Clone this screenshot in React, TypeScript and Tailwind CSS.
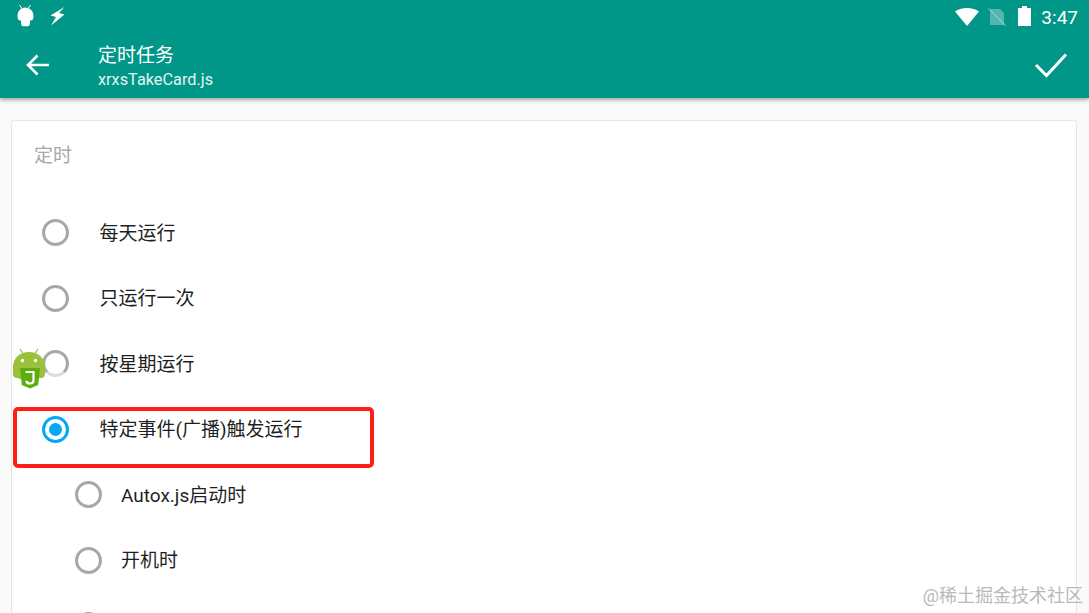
const cjk = "font-['Roboto','Noto_Sans_CJK_SC',sans-serif]";

function Radio({ checked = false, fading = false }: { checked?: boolean; fading?: boolean }) {
  return (
    <span
      className={`flex h-[27px] w-[27px] shrink-0 items-center justify-center rounded-full border-[3px] ${
        checked ? "border-[#03a9f4]" : fading ? "border-[#a8a8a8] border-b-[#dcdcdc]" : "border-[#a8a8a8]"
      }`}
    >
      {checked && <span className="h-[13px] w-[13px] rounded-full bg-[#03a9f4]" />}
    </span>
  );
}

function Option({
  label,
  checked,
  nested,
  fading,
}: {
  label?: string;
  checked?: boolean;
  nested?: boolean;
  fading?: boolean;
}) {
  return (
    <div className={`flex h-[65.5px] shrink-0 items-center ${nested ? "pl-[63px]" : "pl-[30px]"}`}>
      <Radio checked={checked} fading={fading} />
      {label && (
        <span className={`pt-[1px] text-[19px] leading-none text-[#1f1f1f] ${nested ? "ml-[19px]" : "ml-[30.5px]"}`}>
          {label}
        </span>
      )}
    </div>
  );
}

function StatusBar() {
  return (
    <div className="flex h-[32px] items-center justify-between pl-[15px] pr-[11px] text-white">
      <div className="flex items-center gap-[15px]">
        <svg width="20" height="22" viewBox="0 0 20 22" fill="white">
          <path d="M4.500 0l2.500 3.500M15.500 0L13 3.500" stroke="white" strokeWidth="1" />
          <path d="M10 2.500c4.800 0 8.500 3.500 8.500 8.500 0 2.800-.9 4.500-2.300 4.500-.4 0-.8-.1-1.200-.3V18c0 1.800-1 3.200-2 3.200H8c-1 0-2-1.400-2-3.200v-2.800c-.4.2-.8.3-1.200.3-1.400 0-2.300-1.700-2.300-4.500 0-5 3.700-8.500 7.500-8.500z" />
        </svg>
        <svg width="15" height="20" viewBox="0 0 15 20" fill="white">
          <path d="M14.500 1L.5 9.500l5.500 1.500L1 19.500 14.500 8.500 9 7z" />
        </svg>
      </div>
      <div className="flex items-center">
        <svg width="24" height="18" viewBox="0 0 24 18" fill="white" className="mt-[1px]">
          <path d="M0 3.500C3 1.200 7.300 0 12 0s9 1.200 12 3.500L12 18z" />
        </svg>
        <svg width="18" height="18" viewBox="0 0 18 18" fill="none" className="ml-[9px] mt-[2px]">
          <path d="M2 1h10l4 4v12H2z" fill="white" fillOpacity="0.32" />
          <path d="M0 0l18 18" stroke="white" strokeOpacity="0.32" strokeWidth="1.200" />
        </svg>
        <svg width="13" height="20" viewBox="0 0 13 20" fill="white" className="ml-[12px]">
          <path d="M4 0h5v2h4v18H0V2h4z" />
        </svg>
        <span className="ml-[10px] mt-[2px] font-['Roboto',sans-serif] text-[19px] leading-none">3:47</span>
      </div>
    </div>
  );
}

function Toolbar() {
  return (
    <div className="relative z-10 bg-[#009688] shadow-[0_2px_4px_rgba(0,0,0,0.35)]">
      <StatusBar />
      <div className="flex h-[66px] items-center pl-[25px] pr-[21px] text-white">
        <svg width="26" height="26" viewBox="0 0 26 26" fill="none" stroke="white" strokeWidth="2.600">
          <path d="M24 13H3M12.500 3.500L3 13l9.500 9.500" />
        </svg>
        <div className="ml-[47px] mt-[3px] flex-1">
          <div className="text-[19px] leading-[26px]">定时任务</div>
          <div className="font-['Roboto',sans-serif] text-[16.3px] leading-[22px] text-[#e3f3f1]">xrxsTakeCard.js</div>
        </div>
        <svg width="34" height="26" viewBox="0 0 34 26" fill="none" stroke="white" strokeWidth="3">
          <path d="M2 13l10.500 10.500L32 2.500" />
        </svg>
      </div>
    </div>
  );
}

function AutoJsBadge() {
  return (
    <svg width="36" height="42" viewBox="0 0 36 42" className="absolute left-[11px] top-[348px]">
      <path d="M9 1l4 6M27 1l-4 6" stroke="#9dc23a" strokeWidth="1.200" />
      <path d="M18 4c9.500 0 16 6.500 16 15v7c0 2.500-1.500 4-3.500 4H28v1H8v-1H5.500C3.500 30 2 28.500 2 26v-7C2 10.500 8.500 4 18 4z" fill="#9ac13a" />
      <circle cx="11.500" cy="12.500" r="1.700" fill="white" />
      <circle cx="24.500" cy="12.500" r="1.700" fill="white" />
      <path d="M9 20h20l-1.800 17L19 40.500 10.800 37z" fill="#5fae10" />
      <path d="M22.500 24v8.500c0 1.800-1.200 3-3.500 3s-3.500-1.200-3.500-2.800" fill="none" stroke="white" strokeWidth="2.200" />
      <path d="M14.500 24h9" stroke="white" strokeWidth="2" />
    </svg>
  );
}

export default function App() {
  return (
    <div className={`relative h-[613px] w-[1089px] overflow-hidden bg-[#fafafa] ${cjk}`}>
      <Toolbar />
      <div className="ml-[11px] mr-[12px] mt-[22px] flex h-[600px] flex-col rounded-[3px] border border-[#e6e6e6] bg-white">
        <div className="h-[79px] pl-[22px] pt-[24px] text-[19px] leading-[22px] text-[#a8a8a8]">定时</div>
        <Option label="每天运行" />
        <Option label="只运行一次" />
        <Option label="按星期运行" fading />
        <Option label="特定事件(广播)触发运行" checked />
        <Option label="Autox.js启动时" nested />
        <Option label="开机时" nested />
        <Option nested />
      </div>
      <div className="absolute left-[13px] top-[407px] h-[61px] w-[361px] rounded-[5px] border-[4px] border-[#fb1f14]" />
      <AutoJsBadge />
      <div className="absolute right-[6px] top-[585px] text-[18px] leading-[22px] text-[#b9b9b9]">@稀土掘金技术社区</div>
    </div>
  );
}
